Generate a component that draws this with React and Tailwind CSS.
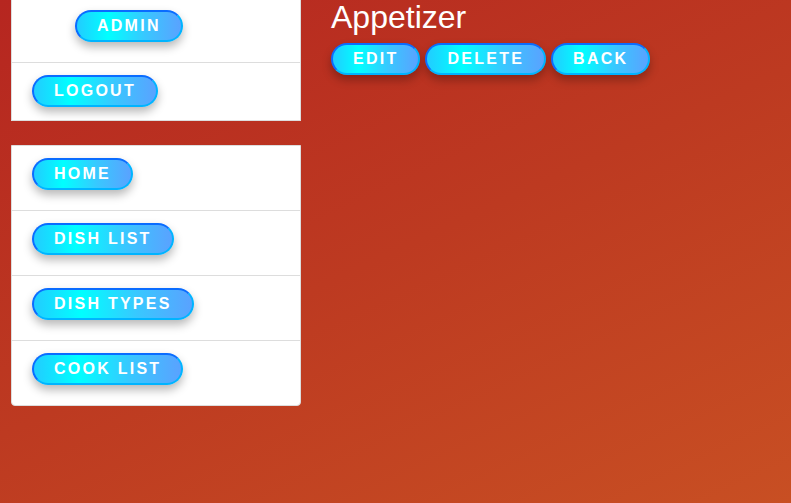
const btn =
    "inline-block rounded-full border-2 px-5 py-1 text-[16px] leading-5 font-bold tracking-[2.25px] text-white bg-[linear-gradient(90deg,#22ccff_0%,#00ffff_30%,#38c8ff_65%,#5aa2ff_100%)] shadow-[0_5px_10px_rgba(0,0,0,0.28)] [border-color:#0a6cff_#00b4ff_#00b4ff_#0a6cff]";

function NavButton({label}) {
    return <button type="button" className={btn}>{label}</button>;
}

export default function App() {
    return (
        <div
            className="min-h-[503px] w-full bg-[linear-gradient(155deg,#b62620_0%,#bd3a21_50%,#c84f23_100%)] flex gap-[30px] pl-[11px]"
            style={{fontFamily: '"Liberation Sans", Arial, sans-serif'}}
        >
            {/* sidebar */}
            <div className="w-[290px] shrink-0 flex flex-col gap-6">
                <div className="bg-white border border-t-0 border-[#dddddd]">
                    <div className="pt-[10px] pb-5 pl-[63px] border-b border-[#dddddd]">
                        <NavButton label="ADMIN"/>
                    </div>
                    <div className="pt-3 pb-[13px] pl-5">
                        <NavButton label="LOGOUT"/>
                    </div>
                </div>

                <div className="bg-white border border-[#dddddd] rounded-b">
                    {["HOME", "DISH LIST", "DISH TYPES", "COOK LIST"].map((item, i) => (
                        <div key={item}
                             className={"pt-3 pb-5 pl-5" + (i < 3 ? " border-b border-[#dddddd]" : "")}>
                            <NavButton label={item}/>
                        </div>
                    ))}
                </div>
            </div>

            {/* main */}
            <div className="flex flex-col">
                <h1 className="text-[32px] leading-[32px] text-white font-normal pt-[1px]">Appetizer</h1>
                <div className="flex gap-[5px] mt-[10px]">
                    <NavButton label="EDIT"/>
                    <NavButton label="DELETE"/>
                    <NavButton label="BACK"/>
                </div>
            </div>
        </div>
    );
}
